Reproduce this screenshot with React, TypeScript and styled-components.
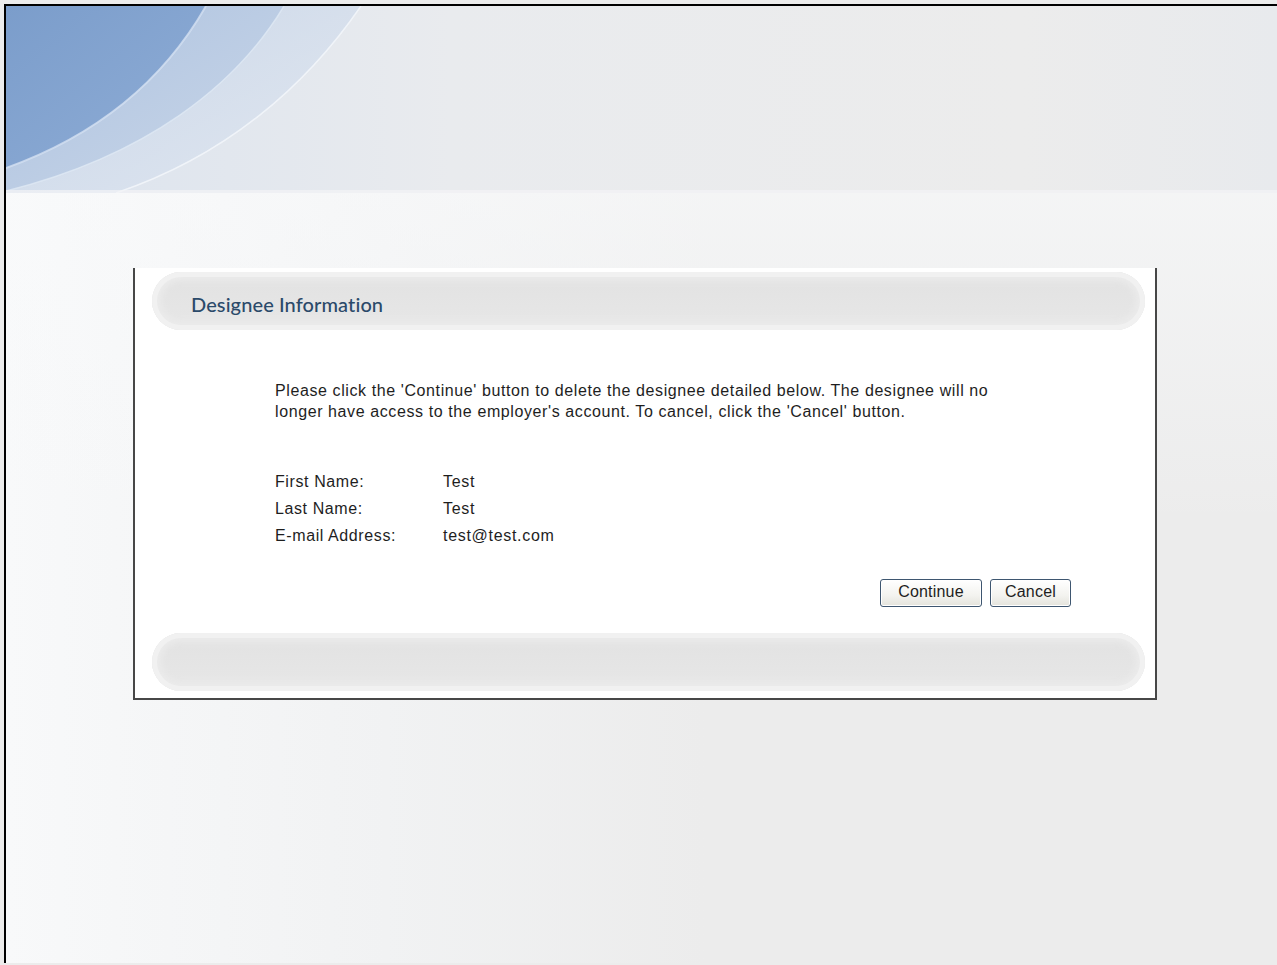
import styled, { createGlobalStyle } from 'styled-components';

const GlobalStyle = createGlobalStyle`
  html, body {
    margin: 0;
    padding: 0;
    background: #ececec;
  }
  body {
    font-family: 'Liberation Sans', Arial, sans-serif;
  }
`;

const Frame = styled.div`
  margin: 4px 0 0 4px;
  border-top: 2px solid #000;
  border-left: 2px solid #000;
  min-height: 959px;
  box-sizing: border-box;
  background:
    linear-gradient(180deg, rgba(249, 250, 251, 0.95) 0, rgba(236, 236, 236, 0) 520px),
    linear-gradient(90deg, #f8f9fa 0, #f1f2f3 380px, #ececec 700px);
`;

const Banner = styled.svg`
  display: block;
  width: 100%;
  height: 187px;
`;

const Content = styled.div`
  padding: 75px 0 0 127px;
`;

const Panel = styled.div`
  width: 1024px;
  box-sizing: border-box;
  background: #fff;
  border: 2px solid #474747;
  border-top: none;
  padding: 4px 10px 7px 17px;
  display: flex;
  flex-direction: column;
`;

const Pill = styled.div`
  height: 58px;
  border-radius: 29px;
  box-sizing: border-box;
  display: flex;
  align-items: center;
  padding-left: 39px;
  background: linear-gradient(180deg, #e2e2e2 0, #e7e7e7 100%);
  box-shadow:
    inset 0 0 0 5px #f1f1f1,
    inset 0 0 6px 9px #ebebeb;
`;

const Title = styled.h2`
  margin: 6px 0 0;
  font-family: Lato, 'Open Sans', sans-serif;
  font-size: 20px;
  font-weight: 500;
  color: #2b4a6a;
  letter-spacing: 0.1px;
`;

const Body = styled.div`
  padding: 50px 74px 26px 123px;
  color: #1e1e1e;
  font-size: 16px;
  letter-spacing: 0.6px;
`;

const Intro = styled.p`
  margin: 0 0 49px;
  line-height: 21px;
  width: 735px;
`;

const Fields = styled.div`
  display: grid;
  grid-template-columns: 168px auto;
  row-gap: 6px;
  line-height: 21px;
`;

const Value = styled.span`
  letter-spacing: 0.7px;
`;

const Actions = styled.div`
  margin-top: 33px;
  display: flex;
  justify-content: flex-end;
  gap: 8px;
`;

const Button = styled.button<{ $w: number }>`
  width: ${({ $w }) => $w}px;
  height: 28px;
  border: 1px solid #3e5670;
  border-radius: 3px;
  background: linear-gradient(180deg, #ffffff 0, #f3f3ef 60%, #e4e3dc 100%);
  box-shadow: inset 0 0 0 1px #fff;
  font-family: 'Liberation Sans', Arial, sans-serif;
  font-size: 16px;
  letter-spacing: 0.2px;
  color: #1e1e1e;
  padding: 0 0 2px;
  cursor: pointer;
`;

const fields = [
  ['First Name:', 'Test'],
  ['Last Name:', 'Test'],
  ['E-mail Address:', 'test@test.com'],
];

export default function App() {
  return (
    <>
      <GlobalStyle />
      <Frame>
        <Banner viewBox="0 0 1271 187" preserveAspectRatio="none">
          <defs>
            <linearGradient id="band" x1="0" y1="0" x2="1" y2="0">
              <stop offset="0" stopColor="#dbe3ee" />
              <stop offset="0.35" stopColor="#e9ebee" />
              <stop offset="0.8" stopColor="#ececec" />
              <stop offset="1" stopColor="#e8eaed" />
            </linearGradient>
            <linearGradient id="outer" x1="0" y1="0" x2="1" y2="1">
              <stop offset="0" stopColor="#c3d2e7" />
              <stop offset="1" stopColor="#dfe6f0" />
            </linearGradient>
            <linearGradient id="mid" x1="0" y1="0" x2="1" y2="1">
              <stop offset="0" stopColor="#aec3e0" />
              <stop offset="1" stopColor="#c9d6e8" />
            </linearGradient>
            <linearGradient id="inner" x1="0" y1="0" x2="1" y2="1">
              <stop offset="0" stopColor="#7b9dcb" />
              <stop offset="1" stopColor="#8fadd6" />
            </linearGradient>
          </defs>
          <rect width="1271" height="187" fill="url(#band)" />
          <path d="M0 0 H355 C300 80 220 150 110 187 H0 Z" fill="url(#outer)" opacity="0.75" />
          <path d="M0 0 H278 C230 80 140 150 0 185 Z" fill="url(#mid)" />
          <path d="M0 0 H200 C160 70 95 128 0 162 Z" fill="url(#inner)" />
          <path d="M200 0 C160 70 95 128 0 162" fill="none" stroke="#d3e0f1" strokeWidth="2" opacity="0.8" />
          <path d="M278 0 C230 80 140 150 0 185" fill="none" stroke="#dfe8f4" strokeWidth="1.5" opacity="0.8" />
          <path d="M355 0 C300 80 220 150 110 187" fill="none" stroke="#f2f5f9" strokeWidth="1.5" opacity="0.9" />
          <rect y="184" width="1271" height="3" fill="#f3f4f6" opacity="0.7" />
        </Banner>
        <Content>
          <Panel>
            <Pill>
              <Title>Designee Information</Title>
            </Pill>
            <Body>
              <Intro>
                Please click the 'Continue' button to delete the designee detailed below. The designee will no
                longer have access to the employer's account. To cancel, click the 'Cancel' button.
              </Intro>
              <Fields>
                {fields.map(([label, value]) => (
                  <>
                    <span key={label}>{label}</span>
                    <Value key={label + '-v'}>{value}</Value>
                  </>
                ))}
              </Fields>
              <Actions>
                <Button $w={102}>Continue</Button>
                <Button $w={81}>Cancel</Button>
              </Actions>
            </Body>
            <Pill />
          </Panel>
        </Content>
      </Frame>
    </>
  );
}
